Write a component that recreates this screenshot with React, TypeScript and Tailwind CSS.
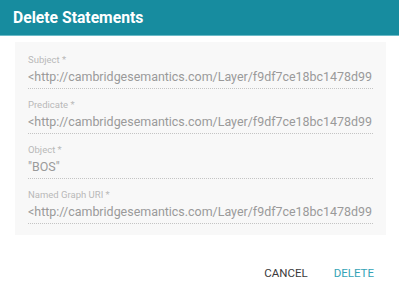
import React from "react";

const fields = [
  { label: "Subject *", value: "<http://cambridgesemantics.com/Layer/f9df7ce18bc1478d99" },
  { label: "Predicate *", value: "<http://cambridgesemantics.com/Layer/f9df7ce18bc1478d99" },
  { label: "Object *", value: "\"BOS\"" },
  { label: "Named Graph URI *", value: "<http://cambridgesemantics.com/Layer/f9df7ce18bc1478d99" },
];

export default function App() {
  return (
    <div className="w-[399px] h-[289px] bg-white overflow-hidden" style={{ fontFamily: "Roboto, 'Liberation Sans', sans-serif" }}>
      <div className="h-[36px] bg-[#178c9f] border-b border-[#6bbac7] flex items-center pl-[13px]">
        <h1 className="text-[15.7px] font-bold text-white leading-none">Delete Statements</h1>
      </div>
      <div className="mx-[15px] mt-[6px] w-[371px] h-[193px] bg-[#f8f8f8] px-[13px] pt-[12px]">
        {fields.map((f) => (
          <div key={f.label} className="h-[45px]">
            <div className="text-[9.5px] leading-[12px] text-[#b9b9b9]">{f.label}</div>
            <div className="mt-[2px] text-[12.45px] leading-[18px] text-[#9a9a9a] whitespace-nowrap overflow-hidden">{f.value}</div>
            <div className="mt-[2px] border-b border-dotted border-[#c4c4c4]" />
          </div>
        ))}
      </div>
      <div className="flex justify-end gap-[26px] pr-[25px] mt-[33px]">
        <span className="text-[11.5px] font-normal text-[#3a3a3a] leading-none">CANCEL</span>
        <span className="text-[11.5px] font-normal text-[#33a3b6] leading-none">DELETE</span>
      </div>
    </div>
  );
}
